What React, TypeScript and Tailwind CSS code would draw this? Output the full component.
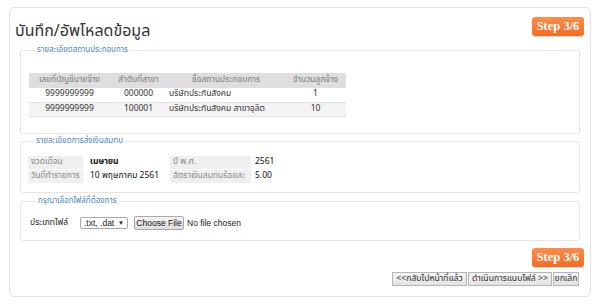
const thai = "font-['Tahoma','Noto_Sans_Thai','Noto_Sans','Liberation_Sans',sans-serif]";

function StepBadge() {
  return (
    <div className="w-[52px] h-[19px] rounded-[3px] bg-gradient-to-b from-[#ff8c4a] to-[#f56b1f] flex items-center justify-center text-white text-[12.5px] font-bold font-['Liberation_Serif',serif] leading-none shadow-[0_1px_1px_rgba(0,0,0,0.15)]">
      Step 3/6
    </div>
  );
}

function Legend({ children }: { children: React.ReactNode }) {
  return (
    <legend className="ml-[6px] px-[2px] text-[8px] leading-[10px] text-[#4a86c5]">{children}</legend>
  );
}

const employers = [
  { acc: "9999999999", branch: "000000", name: "บริษัทประกันสังคม", count: "1" },
  { acc: "9999999999", branch: "100001", name: "บริษัทประกันสังคม สาขาอุลิต", count: "10" },
];

export default function App() {
  return (
    <div className={`w-[600px] h-[305px] bg-white pt-[7px] pl-[9px] text-[#333] ${thai}`}>
      <div className="w-[582px] h-[290px] border border-[#e4e4e4] rounded-[5px] flex flex-col">
        <div className="h-[37px] flex justify-between items-start pl-[5px] pr-[6px] pt-[9px]">
          <h1 className="text-[16px] leading-[20px] mt-[4px] text-[#333]">บันทึก/อัพโหลดข้อมูล</h1>
          <StepBadge />
        </div>

        <fieldset className="ml-[10px] w-[560px] h-[89px] border border-[#e6e6e6] rounded-[3px] pl-[8px]">
          <Legend>รายละเอียดสถานประกอบการ</Legend>
          <table className="mt-[18px] w-[317px] border-collapse text-[8.5px] table-fixed">
            <colgroup>
              <col className="w-[81px]" />
              <col className="w-[57px]" />
              <col className="w-[118px]" />
              <col className="w-[61px]" />
            </colgroup>
            <thead>
              <tr className="h-[15px] bg-[#dedede] text-[#7a7a7a]">
                <th className="font-normal text-center">เลขที่บัญชีนายจ้าง</th>
                <th className="font-normal text-center">ลำดับที่สาขา</th>
                <th className="font-normal text-center">ชื่อสถานประกอบการ</th>
                <th className="font-normal text-center">จำนวนลูกจ้าง</th>
              </tr>
            </thead>
            <tbody>
              {employers.map((e, i) => (
                <tr key={i} className={`h-[14px] border-b border-[#e2e2e2] ${i % 2 ? "bg-[#f3f3f3]" : "bg-white"}`}>
                  <td className="text-center">{e.acc}</td>
                  <td className="text-center">{e.branch}</td>
                  <td className="text-left pl-[2px]">{e.name}</td>
                  <td className="text-center">{e.count}</td>
                </tr>
              ))}
            </tbody>
          </table>
        </fieldset>

        <fieldset className="mt-[2px] ml-[10px] w-[560px] h-[57px] border border-[#e6e6e6] rounded-[3px] pl-[7px]">
          <Legend>รายละเอียดการส่งเงินสมทบ</Legend>
          <div className="mt-[10px] grid grid-cols-[55px_87px_81px_60px] grid-rows-[13px_14px] items-stretch text-[8.5px]">
            <div className="bg-[#efefef] text-[#888] pl-[3px] flex items-center">งวดเดือน</div>
            <div className="pl-[7px] flex items-center text-[#111] font-bold">เมษายน</div>
            <div className="bg-[#efefef] text-[#888] pl-[3px] flex items-center">ปี พ.ศ.</div>
            <div className="pl-[4px] flex items-center text-[#111]">2561</div>
            <div className="bg-[#efefef] text-[#888] pl-[3px] flex items-center border-t border-white">วันที่ทำรายการ</div>
            <div className="pl-[7px] flex items-center text-[#111]">10 พฤษภาคม 2561</div>
            <div className="bg-[#efefef] text-[#888] pl-[3px] flex items-center border-t border-white">อัตราเงินสมทบร้อยละ</div>
            <div className="pl-[4px] flex items-center text-[#111]">5.00</div>
          </div>
        </fieldset>

        <fieldset className="mt-[3px] ml-[10px] w-[560px] h-[45px] border border-[#e6e6e6] rounded-[3px] pl-[9px]">
          <Legend>กรุณาเลือกไฟล์ที่ต้องการ</Legend>
          <div className="mt-[10px] flex items-center text-[8.5px]">
            <span className="w-[50px] text-[#222]">ประเภทไฟล์</span>
            <div className="w-[48px] h-[12px] border border-[#a9a9a9] rounded-[2px] flex items-center justify-between px-[3px] bg-white text-[#222] font-['Liberation_Sans',sans-serif]">
              <span>.txt, .dat</span>
              <span className="text-[6px]">▼</span>
            </div>
            <button className="ml-[6px] w-[50px] h-[14px] border border-[#a9a9a9] rounded-[2px] bg-gradient-to-b from-[#f4f4f4] to-[#dedede] text-[8.5px] text-[#111] font-['Liberation_Sans',sans-serif] leading-none">
              Choose File
            </button>
            <span className="ml-[3px] text-[#222] font-['Liberation_Sans',sans-serif]">No file chosen</span>
          </div>
        </fieldset>

        <div className="mt-[7px] flex justify-end pr-[6px]">
          <StepBadge />
        </div>

        <div className="mt-[5px] flex justify-end gap-[1px] pr-[11px] text-[8.7px]">
          <button className="h-[14px] w-[75px] border border-[#b5b5b5] bg-gradient-to-b from-[#f5f5f5] to-[#e2e2e2] text-[#333] leading-none whitespace-nowrap">
            &lt;&lt;กลับไปหน้าที่แล้ว
          </button>
          <button className="h-[14px] w-[84px] border border-[#b5b5b5] bg-gradient-to-b from-[#f5f5f5] to-[#e2e2e2] text-[#333] leading-none whitespace-nowrap">
            ดำเนินการแนบไฟล์ &gt;&gt;
          </button>
          <button className="h-[14px] w-[26px] border border-[#b5b5b5] bg-gradient-to-b from-[#f5f5f5] to-[#e2e2e2] text-[#333] leading-none whitespace-nowrap">
            ยกเลิก
          </button>
        </div>
      </div>
    </div>
  );
}
